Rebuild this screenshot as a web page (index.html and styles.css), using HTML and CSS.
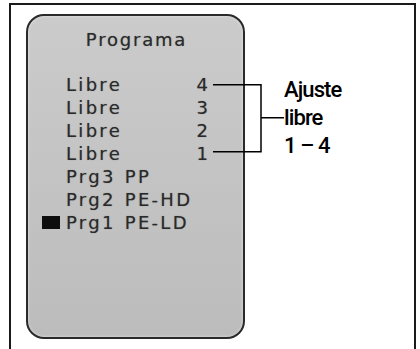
FILE: index.html
```html
<!DOCTYPE html>
<html lang="es">
<head>
<meta charset="utf-8">
<link rel="stylesheet" href="styles.css">
</head>
<body>
<div class="frame">
  <div class="device">
    <div class="title">Programa</div>
    <div class="rows">
      <div class="row"><span class="mark"></span><span class="label">Libre</span><span class="num">4</span></div>
      <div class="row"><span class="mark"></span><span class="label">Libre</span><span class="num">3</span></div>
      <div class="row"><span class="mark"></span><span class="label">Libre</span><span class="num">2</span></div>
      <div class="row"><span class="mark"></span><span class="label">Libre</span><span class="num">1</span></div>
      <div class="row"><span class="mark"></span><span class="label">Prg3 PP</span></div>
      <div class="row"><span class="mark"></span><span class="label">Prg2 PE-HD</span></div>
      <div class="row"><span class="mark on"></span><span class="label">Prg1 PE-LD</span></div>
    </div>
  </div>
  <div class="note">
    <div>Ajuste</div>
    <div>libre</div>
    <div>1 – 4</div>
  </div>
  <svg class="bracket" width="90" height="80" viewBox="0 0 90 80">
    <path d="M0 0.75 H48 V67.75 H0 M48 33.75 H71" fill="none" stroke="#000" stroke-width="1.5"/>
  </svg>
</div>
</body>
</html>
```
FILE: styles.css
```css
html, body {
  margin: 0;
  padding: 0;
  background: #fff;
  overflow: hidden;
}
.frame {
  position: relative;
  margin: 3px 0 0 9px;
  width: 403px;
  height: 360px;
  border: 2px solid #1a1a1a;
  border-bottom: none;
  display: flex;
  align-items: flex-start;
}
.device {
  margin: 9px 0 0 15px;
  width: 215px;
  height: 321px;
  border: 2px solid #2a2a2a;
  border-radius: 18px;
  background: linear-gradient(#cbcbcb, #c2c2c2 60%, #bcbcbc);
  box-shadow: inset 0 0 3px rgba(255,255,255,0.6);
  font-family: "DejaVu Sans", sans-serif;
  font-size: 18px;
  color: #2a2a2a;
  text-shadow: 0 0 1px rgba(40,40,40,0.45);
  display: flex;
  flex-direction: column;
}
.title {
  padding-top: 14px;
  line-height: 20px;
  text-align: center;
  letter-spacing: 1.8px;
  padding-left: 2px;
}
.rows {
  margin: 23px 0 0 14px;
  width: 166px;
  display: flex;
  flex-direction: column;
}
.row {
  display: flex;
  align-items: center;
  height: 23px;
  line-height: 23px;
  letter-spacing: 2.3px;
}
.mark {
  width: 18px;
  height: 13px;
  margin-right: 6px;
  flex: none;
}
.mark.on {
  background: #0e0e0e;
}
.label {
  flex: 1;
  white-space: pre;
  word-spacing: 1px;
}
.num {
  letter-spacing: 0;
}
.note {
  margin: 71px 0 0 39px;
  font-family: Roboto, "Liberation Sans", sans-serif;
  font-weight: 500;
  font-size: 22px;
  line-height: 28px;
  letter-spacing: -0.9px;
  color: #000;
}
.bracket {
  position: absolute;
  left: 202px;
  top: 79px;
}
```
